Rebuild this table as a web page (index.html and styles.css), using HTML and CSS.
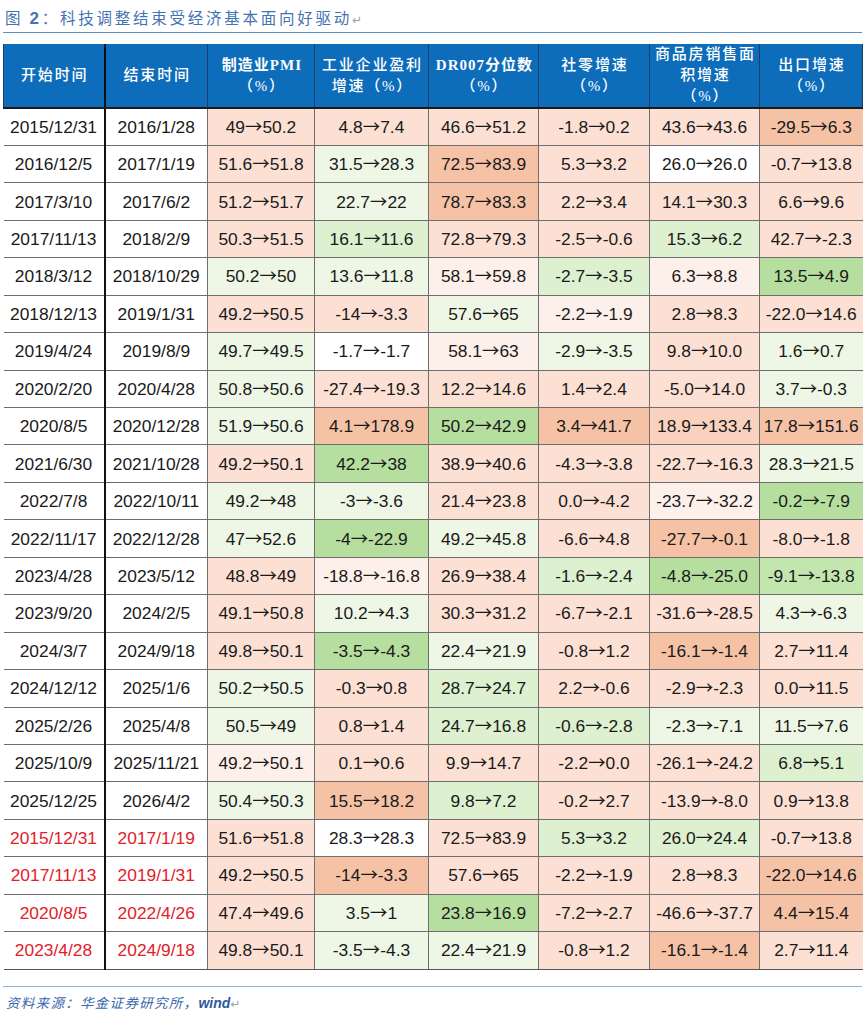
FILE: index.html
```html
<!DOCTYPE html>
<html lang="zh-CN">
<head>
<meta charset="utf-8">
<title>图 2：科技调整结束受经济基本面向好驱动</title>
<link rel="stylesheet" href="styles.css">
</head>
<body>
<div class="page">
  <div class="title">图 <span class="num">2</span>：科技调整结束受经济基本面向好驱动<span class="ret">↵</span></div>
  <table class="data">
    <colgroup>
      <col class="w101"><col class="w103"><col class="w107"><col class="w114"><col class="w110"><col class="w111"><col class="w110"><col class="w103">
    </colgroup>
    <thead>
      <tr>
        <th class="sep">开始时间</th>
        <th>结束时间</th>
        <th><span class="lat">制造业PMI</span><br>（%）</th>
        <th>工业企业盈利<br>增速（%）</th>
        <th><span class="lat">DR007分位数</span><br>（%）</th>
        <th>社零增速<br>（%）</th>
        <th>商品房销售面<br>积增速<br>（%）</th>
        <th>出口增速<br>（%）</th>
      </tr>
    </thead>
    <tbody>
      <tr><td class="d sep">2015/12/31</td><td class="d">2016/1/28</td><td class="p1">49<span class="ar">→</span>50.2</td><td class="p1">4.8<span class="ar">→</span>7.4</td><td class="p1">46.6<span class="ar">→</span>51.2</td><td class="p1">-1.8<span class="ar">→</span>0.2</td><td class="p1">43.6<span class="ar">→</span>43.6</td><td class="p2">-29.5<span class="ar">→</span>6.3</td></tr>
      <tr><td class="d sep">2016/12/5</td><td class="d">2017/1/19</td><td class="p1">51.6<span class="ar">→</span>51.8</td><td class="g0">31.5<span class="ar">→</span>28.3</td><td class="p2">72.5<span class="ar">→</span>83.9</td><td class="p1">5.3<span class="ar">→</span>3.2</td><td class="w">26.0<span class="ar">→</span>26.0</td><td class="p1">-0.7<span class="ar">→</span>13.8</td></tr>
      <tr><td class="d sep">2017/3/10</td><td class="d">2017/6/2</td><td class="p1">51.2<span class="ar">→</span>51.7</td><td class="g0">22.7<span class="ar">→</span>22</td><td class="p2">78.7<span class="ar">→</span>83.3</td><td class="p1">2.2<span class="ar">→</span>3.4</td><td class="p1">14.1<span class="ar">→</span>30.3</td><td class="p1">6.6<span class="ar">→</span>9.6</td></tr>
      <tr><td class="d sep">2017/11/13</td><td class="d">2018/2/9</td><td class="p1">50.3<span class="ar">→</span>51.5</td><td class="g1">16.1<span class="ar">→</span>11.6</td><td class="p1">72.8<span class="ar">→</span>79.3</td><td class="p1">-2.5<span class="ar">→</span>-0.6</td><td class="g1">15.3<span class="ar">→</span>6.2</td><td class="p1">42.7<span class="ar">→</span>-2.3</td></tr>
      <tr><td class="d sep">2018/3/12</td><td class="d">2018/10/29</td><td class="g0">50.2<span class="ar">→</span>50</td><td class="g0">13.6<span class="ar">→</span>11.8</td><td class="p0">58.1<span class="ar">→</span>59.8</td><td class="g1">-2.7<span class="ar">→</span>-3.5</td><td class="p0">6.3<span class="ar">→</span>8.8</td><td class="g2">13.5<span class="ar">→</span>4.9</td></tr>
      <tr><td class="d sep">2018/12/13</td><td class="d">2019/1/31</td><td class="p1">49.2<span class="ar">→</span>50.5</td><td class="p1">-14<span class="ar">→</span>-3.3</td><td class="g0">57.6<span class="ar">→</span>65</td><td class="p0">-2.2<span class="ar">→</span>-1.9</td><td class="p1">2.8<span class="ar">→</span>8.3</td><td class="p1">-22.0<span class="ar">→</span>14.6</td></tr>
      <tr><td class="d sep">2019/4/24</td><td class="d">2019/8/9</td><td class="g0">49.7<span class="ar">→</span>49.5</td><td class="w">-1.7<span class="ar">→</span>-1.7</td><td class="p0">58.1<span class="ar">→</span>63</td><td class="g0">-2.9<span class="ar">→</span>-3.5</td><td class="p1">9.8<span class="ar">→</span>10.0</td><td class="g0">1.6<span class="ar">→</span>0.7</td></tr>
      <tr><td class="d sep">2020/2/20</td><td class="d">2020/4/28</td><td class="g0">50.8<span class="ar">→</span>50.6</td><td class="p1">-27.4<span class="ar">→</span>-19.3</td><td class="p1">12.2<span class="ar">→</span>14.6</td><td class="p1">1.4<span class="ar">→</span>2.4</td><td class="p1">-5.0<span class="ar">→</span>14.0</td><td class="g0">3.7<span class="ar">→</span>-0.3</td></tr>
      <tr><td class="d sep">2020/8/5</td><td class="d">2020/12/28</td><td class="g0">51.9<span class="ar">→</span>50.6</td><td class="p2">4.1<span class="ar">→</span>178.9</td><td class="g2">50.2<span class="ar">→</span>42.9</td><td class="p2">3.4<span class="ar">→</span>41.7</td><td class="p15">18.9<span class="ar">→</span>133.4</td><td class="p2">17.8<span class="ar">→</span>151.6</td></tr>
      <tr><td class="d sep">2021/6/30</td><td class="d">2021/10/28</td><td class="p1">49.2<span class="ar">→</span>50.1</td><td class="g2">42.2<span class="ar">→</span>38</td><td class="p1">38.9<span class="ar">→</span>40.6</td><td class="p1">-4.3<span class="ar">→</span>-3.8</td><td class="p1">-22.7<span class="ar">→</span>-16.3</td><td class="g0">28.3<span class="ar">→</span>21.5</td></tr>
      <tr><td class="d sep">2022/7/8</td><td class="d">2022/10/11</td><td class="g0">49.2<span class="ar">→</span>48</td><td class="g0">-3<span class="ar">→</span>-3.6</td><td class="p1">21.4<span class="ar">→</span>23.8</td><td class="p1">0.0<span class="ar">→</span>-4.2</td><td class="p0">-23.7<span class="ar">→</span>-32.2</td><td class="g2">-0.2<span class="ar">→</span>-7.9</td></tr>
      <tr><td class="d sep">2022/11/17</td><td class="d">2022/12/28</td><td class="g0">47<span class="ar">→</span>52.6</td><td class="g2">-4<span class="ar">→</span>-22.9</td><td class="g0">49.2<span class="ar">→</span>45.8</td><td class="p1">-6.6<span class="ar">→</span>4.8</td><td class="p2">-27.7<span class="ar">→</span>-0.1</td><td class="p1">-8.0<span class="ar">→</span>-1.8</td></tr>
      <tr><td class="d sep">2023/4/28</td><td class="d">2023/5/12</td><td class="p1">48.8<span class="ar">→</span>49</td><td class="p0">-18.8<span class="ar">→</span>-16.8</td><td class="p1">26.9<span class="ar">→</span>38.4</td><td class="g1">-1.6<span class="ar">→</span>-2.4</td><td class="g2">-4.8<span class="ar">→</span>-25.0</td><td class="g15">-9.1<span class="ar">→</span>-13.8</td></tr>
      <tr><td class="d sep">2023/9/20</td><td class="d">2024/2/5</td><td class="p1">49.1<span class="ar">→</span>50.8</td><td class="g0">10.2<span class="ar">→</span>4.3</td><td class="p1">30.3<span class="ar">→</span>31.2</td><td class="p1">-6.7<span class="ar">→</span>-2.1</td><td class="p1">-31.6<span class="ar">→</span>-28.5</td><td class="g0">4.3<span class="ar">→</span>-6.3</td></tr>
      <tr><td class="d sep">2024/3/7</td><td class="d">2024/9/18</td><td class="p1">49.8<span class="ar">→</span>50.1</td><td class="g2">-3.5<span class="ar">→</span>-4.3</td><td class="g0">22.4<span class="ar">→</span>21.9</td><td class="p1">-0.8<span class="ar">→</span>1.2</td><td class="p2">-16.1<span class="ar">→</span>-1.4</td><td class="p1">2.7<span class="ar">→</span>11.4</td></tr>
      <tr><td class="d sep">2024/12/12</td><td class="d">2025/1/6</td><td class="g0">50.2<span class="ar">→</span>50.5</td><td class="p1">-0.3<span class="ar">→</span>0.8</td><td class="g1">28.7<span class="ar">→</span>24.7</td><td class="p1">2.2<span class="ar">→</span>-0.6</td><td class="p1">-2.9<span class="ar">→</span>-2.3</td><td class="p1">0.0<span class="ar">→</span>11.5</td></tr>
      <tr><td class="d sep">2025/2/26</td><td class="d">2025/4/8</td><td class="g0">50.5<span class="ar">→</span>49</td><td class="p1">0.8<span class="ar">→</span>1.4</td><td class="g1">24.7<span class="ar">→</span>16.8</td><td class="g1">-0.6<span class="ar">→</span>-2.8</td><td class="g0">-2.3<span class="ar">→</span>-7.1</td><td class="g0">11.5<span class="ar">→</span>7.6</td></tr>
      <tr><td class="d sep">2025/10/9</td><td class="d">2025/11/21</td><td class="p0">49.2<span class="ar">→</span>50.1</td><td class="p1">0.1<span class="ar">→</span>0.6</td><td class="p1">9.9<span class="ar">→</span>14.7</td><td class="p1">-2.2<span class="ar">→</span>0.0</td><td class="p1">-26.1<span class="ar">→</span>-24.2</td><td class="g1">6.8<span class="ar">→</span>5.1</td></tr>
      <tr><td class="d sep">2025/12/25</td><td class="d">2026/4/2</td><td class="g0">50.4<span class="ar">→</span>50.3</td><td class="p2">15.5<span class="ar">→</span>18.2</td><td class="g1">9.8<span class="ar">→</span>7.2</td><td class="p1">-0.2<span class="ar">→</span>2.7</td><td class="p1">-13.9<span class="ar">→</span>-8.0</td><td class="p1">0.9<span class="ar">→</span>13.8</td></tr>
      <tr><td class="d red sep">2015/12/31</td><td class="d red">2017/1/19</td><td class="p1">51.6<span class="ar">→</span>51.8</td><td class="w">28.3<span class="ar">→</span>28.3</td><td class="p1">72.5<span class="ar">→</span>83.9</td><td class="g1">5.3<span class="ar">→</span>3.2</td><td class="g1">26.0<span class="ar">→</span>24.4</td><td class="p1">-0.7<span class="ar">→</span>13.8</td></tr>
      <tr><td class="d red sep">2017/11/13</td><td class="d red">2019/1/31</td><td class="p1">49.2<span class="ar">→</span>50.5</td><td class="p2">-14<span class="ar">→</span>-3.3</td><td class="p1">57.6<span class="ar">→</span>65</td><td class="p1">-2.2<span class="ar">→</span>-1.9</td><td class="p1">2.8<span class="ar">→</span>8.3</td><td class="p2">-22.0<span class="ar">→</span>14.6</td></tr>
      <tr><td class="d red sep">2020/8/5</td><td class="d red">2022/4/26</td><td class="p1">47.4<span class="ar">→</span>49.6</td><td class="g0">3.5<span class="ar">→</span>1</td><td class="g2">23.8<span class="ar">→</span>16.9</td><td class="p1">-7.2<span class="ar">→</span>-2.7</td><td class="p1">-46.6<span class="ar">→</span>-37.7</td><td class="p2">4.4<span class="ar">→</span>15.4</td></tr>
      <tr><td class="d red sep">2023/4/28</td><td class="d red">2024/9/18</td><td class="p1">49.8<span class="ar">→</span>50.1</td><td class="g0">-3.5<span class="ar">→</span>-4.3</td><td class="g0">22.4<span class="ar">→</span>21.9</td><td class="p1">-0.8<span class="ar">→</span>1.2</td><td class="p2">-16.1<span class="ar">→</span>-1.4</td><td class="p1">2.7<span class="ar">→</span>11.4</td></tr>
    </tbody>
  </table>
  <div class="source">资料来源：华金证券研究所，<span class="wind">wind</span><span class="ret">↵</span></div>
</div>
</body>
</html>
```
FILE: styles.css
```css
* { box-sizing: border-box; }

body {
  margin: 0;
  background: #ffffff;
  font-family: "Liberation Sans", Arial, "Noto Sans CJK SC", sans-serif;
  color: #1a1a1a;
}

.page {
  width: 864px;
  padding: 0 2px 0 3px;
}

.title {
  height: 33px;
  padding: 7px 0 0 2px;
  border-bottom: 1px solid #5b8fc7;
  font-family: "Noto Sans CJK SC", sans-serif;
  font-size: 15.5px;
  line-height: 20px;
  letter-spacing: 2.75px;
  color: #4572b2;
  white-space: nowrap;
}

.title .num {
  font-family: "Liberation Sans", Arial, sans-serif;
  font-weight: bold;
  font-size: 17px;
  line-height: 1;
}

.ret {
  color: #a0a0a0;
  font-family: "DejaVu Sans", sans-serif;
  font-size: 12px;
  line-height: 1;
  letter-spacing: 0;
  font-style: normal;
  font-weight: normal;
}

table.data {
  margin-top: 11px;
  width: 859px;
  border-collapse: collapse;
  table-layout: fixed;
}

.w101 { width: 101px; }
.w103 { width: 103px; }
.w107 { width: 107px; }
.w110 { width: 110px; }
.w111 { width: 111px; }
.w114 { width: 114px; }

thead th {
  height: 62px;
  padding: 0 0 0 1.8px;
  background: #0d6dbb;
  color: #ffffff;
  font-family: "Liberation Serif", "Noto Sans CJK SC", serif;
  font-weight: 500;
  font-size: 15px;
  line-height: 21px;
  letter-spacing: 1.8px;
  text-align: center;
  vertical-align: middle;
  border-left: 1px solid #1d3f66;
  border-right: 1px solid #1d3f66;
  border-bottom: 2px solid #1a1a1a;
}

thead th .lat {
  font-weight: bold;
  letter-spacing: 1px;
}

tbody td {
  height: 37.45px;
  padding: 0;
  font-size: 17.4px;
  line-height: 20px;
  text-align: center;
  vertical-align: middle;
  white-space: nowrap;
  border: 1px solid #6e6e6e;
}

.ar {
  font-family: "Noto Sans CJK SC", sans-serif;
  font-size: 17.4px;
  line-height: 1;
}

tbody tr:last-child td { border-bottom-color: #555555; }

td.d { background: #ffffff; border-left: none; }
td.red { color: #e3202a; }
.sep { border-right: 2px solid #111111 !important; }

.w   { background: #ffffff; }
.p0  { background: #fdf0ea; }
.p1  { background: #fce0d4; }
.p15 { background: #f9d2bf; }
.p2  { background: #f5c2a6; }
.g0  { background: #eef7e6; }
.g1  { background: #ddf0d0; }
.g15 { background: #c3e5ae; }
.g2  { background: #b6de9f; }

tbody td:last-child { border-right: none; }

.source {
  margin-top: 16px;
  padding: 5px 0 0 3px;
  border-top: 1px solid #8db3de;
  font-family: "Noto Sans CJK SC", sans-serif;
  font-style: italic;
  font-size: 13.5px;
  line-height: 20px;
  letter-spacing: 1.3px;
  color: #3a68ad;
}

.source .wind {
  font-family: "Liberation Sans", Arial, sans-serif;
  font-weight: bold;
  font-size: 14px;
  letter-spacing: 0;
  color: #2e5aa0;
}
```
